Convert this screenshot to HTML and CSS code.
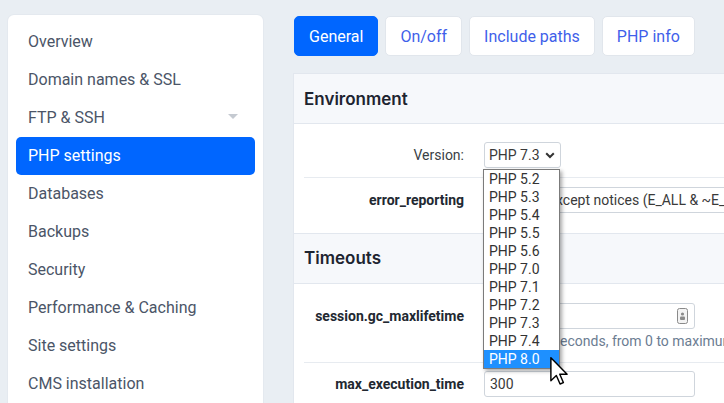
FILE: index.html
```html
<!DOCTYPE html>
<html lang="en">
<head>
<meta charset="utf-8">
<title>PHP settings</title>
<link rel="stylesheet" href="styles.css">
</head>
<body>
<div class="layout">
  <nav class="sidebar">
    <a class="nav-item">Overview</a>
    <a class="nav-item">Domain names &amp; SSL</a>
    <a class="nav-item has-sub">FTP &amp; SSH <span class="caret"></span></a>
    <a class="nav-item active">PHP settings</a>
    <a class="nav-item">Databases</a>
    <a class="nav-item">Backups</a>
    <a class="nav-item">Security</a>
    <a class="nav-item">Performance &amp; Caching</a>
    <a class="nav-item">Site settings</a>
    <a class="nav-item">CMS installation</a>
  </nav>
  <main class="main">
    <div class="tabs">
      <a class="tab active">General</a>
      <a class="tab">On/off</a>
      <a class="tab">Include paths</a>
      <a class="tab">PHP info</a>
    </div>
    <section class="panel">
      <div class="panel-head"><h2>Environment</h2></div>
      <div class="panel-body">
        <div class="row">
          <label class="lbl normal">Version:</label>
          <div class="ctrl">
            <div class="select small">
              <span>PHP 7.3</span>
              <svg class="chev" width="10" height="7" viewBox="0 0 10 7"><path d="M1.2 1.2 L5 5 L8.8 1.2" fill="none" stroke="#333" stroke-width="2"/></svg>
            </div>
          </div>
        </div>
        <div class="row">
          <label class="lbl">error_reporting</label>
          <div class="ctrl">
            <div class="select wide"><span>All errors except notices (E_ALL &amp; ~E_NOTICE)</span></div>
          </div>
        </div>
      </div>
      <div class="panel-head"><h2>Timeouts</h2></div>
      <div class="panel-body">
        <div class="row">
          <label class="lbl">session.gc_maxlifetime</label>
          <div class="ctrl">
            <div class="input">
              <span></span>
              <svg class="autofill" width="11" height="16" viewBox="0 0 11 16">
                <rect x="0.5" y="0.5" width="10" height="15" rx="2" fill="#f3f3f3" stroke="#8a8a8a"/>
                <circle cx="5.5" cy="6" r="1.6" fill="#8a8a8a"/>
                <rect x="3" y="8.5" width="5" height="3.5" rx="1" fill="#8a8a8a"/>
              </svg>
            </div>
            <div class="help">Lifetime in seconds, from 0 to maximum 2147483647</div>
          </div>
        </div>
        <div class="row">
          <label class="lbl">max_execution_time</label>
          <div class="ctrl">
            <div class="input"><span>300</span></div>
          </div>
        </div>
      </div>
    </section>
  </main>
</div>

<ul class="dropdown">
  <li>PHP 5.2</li>
  <li>PHP 5.3</li>
  <li>PHP 5.4</li>
  <li>PHP 5.5</li>
  <li>PHP 5.6</li>
  <li>PHP 7.0</li>
  <li>PHP 7.1</li>
  <li>PHP 7.2</li>
  <li>PHP 7.3</li>
  <li>PHP 7.4</li>
  <li class="sel">PHP 8.0</li>
</ul>

<svg class="cursor" width="19" height="28" viewBox="0 0 13 19.5">
  <path d="M0.5 0.5 L0.5 16.5 L4.3 12.9 L6.9 18.8 L9.2 17.8 L6.7 12 L11.8 12 Z" fill="#fff" stroke="#000" stroke-width="1" stroke-linejoin="round"/>
</svg>
</body>
</html>
```

FILE: styles.css
```css
* { box-sizing: border-box; }

html, body {
  margin: 0;
  padding: 0;
}

body {
  width: 724px;
  height: 403px;
  overflow: hidden;
  background: #e9eef3;
  font-family: Roboto, "Liberation Sans", Arial, sans-serif;
  color: #333;
  position: relative;
}

.layout {
  display: flex;
  align-items: flex-start;
  gap: 30px;
  padding: 15px 0 0 8px;
  width: 1100px;
}

/* Sidebar */
.sidebar {
  width: 255px;
  flex: none;
  background: #fff;
  border-radius: 6px;
  box-shadow: 0 0 0 1px #e4e9ef;
  padding: 8px;
  display: flex;
  flex-direction: column;
  height: 420px;
}

.nav-item {
  display: flex;
  align-items: center;
  justify-content: space-between;
  height: 38px;
  padding: 0 12px 2px;
  border-radius: 5px;
  font-size: 16px;
  color: #4b5567;
  text-decoration: none;
}

.nav-item.active {
  background: #0066ff;
  color: #fff;
}

.caret {
  width: 0;
  height: 0;
  border-left: 5px solid transparent;
  border-right: 5px solid transparent;
  border-top: 5px solid #c5cad1;
  margin-right: 5px;
  margin-top: -1px;
}

/* Main */
.main {
  flex: none;
  width: 760px;
  display: flex;
  flex-direction: column;
  gap: 17px;
}

.tabs {
  display: flex;
  gap: 7px;
  margin: 1px 0 0 1px;
}

.tab {
  height: 40px;
  display: flex;
  align-items: center;
  padding: 0 14px;
  border: 1px solid #e1e6ec;
  background: #fff;
  border-radius: 5px;
  font-size: 16px;
  color: #3f5fea;
}

.tab.active {
  background: #0066ff;
  border-color: #0066ff;
  color: #fff;
}

.panel {
  background: #fff;
  border: 1px solid #e2e7ee;
  border-right: none;
}

.panel-head {
  background: #f6f8fb;
  height: 50px;
  display: flex;
  align-items: center;
  padding: 0 10px;
  border-bottom: 1px solid #e2e7ee;
}

.panel-body + .panel-head {
  border-top: 1px solid #e2e7ee;
  height: 51px;
  padding-bottom: 1px;
}

.panel-head h2 {
  margin: 0;
  font-family: Inter, "Open Sans", sans-serif;
  font-weight: 600;
  font-size: 17px;
  color: #1d2430;
}

.panel-body {
  padding: 9px 0 11px 10px;
}

.panel-body + .panel-head + .panel-body {
  padding-top: 10px;
}

.row {
  display: grid;
  grid-template-columns: 160px 1fr;
  column-gap: 20px;
  padding: 9px 0;
  align-items: start;
}

.row + .row {
  border-top: 1px solid #e7ebf0;
}

.panel-body + .panel-head + .panel-body .row + .row {
  padding-top: 8px;
}

.lbl {
  text-align: right;
  font-size: 14px;
  font-weight: 700;
  color: #222831;
  line-height: 26px;
}

.lbl.normal {
  font-weight: 400;
  color: #3a3f46;
}

.ctrl {
  display: flex;
  flex-direction: column;
}

.select, .input {
  height: 26px;
  border: 1px solid #cfd5dc;
  border-radius: 3px;
  display: flex;
  align-items: center;
  padding: 0 4px;
  font-size: 14px;
  color: #3a3a3a;
  background: #fff;
}

.select.small {
  width: 77px;
  gap: 5px;
}

.select.wide {
  width: 320px;
  white-space: nowrap;
  overflow: hidden;
}

.chev {
  flex: none;
  margin-top: 1px;
}

.input {
  width: 211px;
  justify-content: space-between;
  padding: 0 6px 0 5px;
}

.autofill {
  flex: none;
}

.help {
  font-size: 14px;
  color: #6b7c92;
  line-height: 20px;
  margin-top: 2px;
  margin-bottom: 2px;
  white-space: nowrap;
}

/* Native-looking open dropdown */
.dropdown {
  position: absolute;
  left: 483px;
  top: 169px;
  width: 77px;
  margin: 0;
  padding: 0;
  list-style: none;
  background: #fff;
  border: 1px solid #7b7b7b;
  box-shadow: 2px 2px 4px rgba(0, 0, 0, 0.35);
  font-size: 14px;
  color: #333;
}

.dropdown li {
  height: 18px;
  line-height: 18px;
  padding-left: 5px;
}

.dropdown li.sel {
  background: #1e90ff;
  color: #fff;
}

.cursor {
  position: absolute;
  left: 550px;
  top: 357px;
}
```
